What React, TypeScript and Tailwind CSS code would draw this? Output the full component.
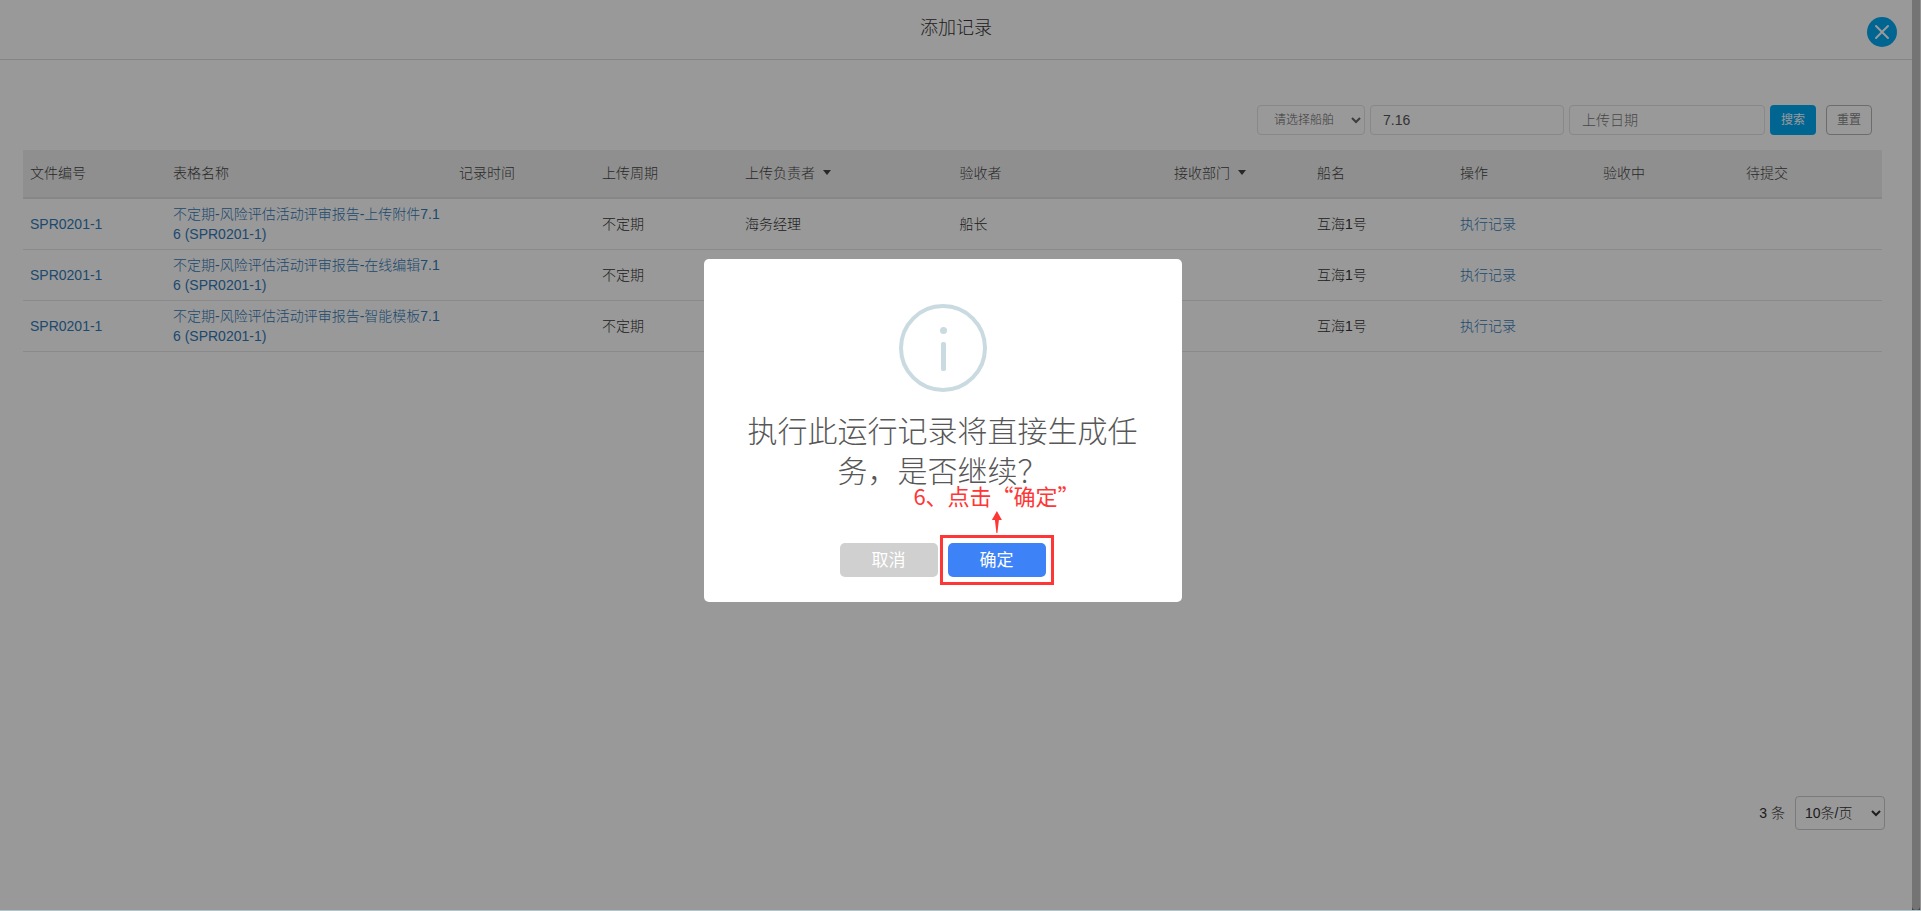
import { X } from "lucide-react";

interface RecordRow {
  code: string;
  name: string;
  period: string;
  uploader: string;
  checker: string;
  ship: string;
}

interface Column {
  title: string;
  width: string;
  sortable?: boolean;
}

const columns: Column[] = [
  { title: "文件编号", width: "w-1/13" },
  { title: "表格名称", width: "w-2/13" },
  { title: "记录时间", width: "w-1/13" },
  { title: "上传周期", width: "w-1/13" },
  { title: "上传负责者", width: "w-3/26", sortable: true },
  { title: "验收者", width: "w-3/26" },
  { title: "接收部门", width: "w-1/13", sortable: true },
  { title: "船名", width: "w-1/13" },
  { title: "操作", width: "w-1/13" },
  { title: "验收中", width: "w-1/13" },
  { title: "待提交", width: "w-1/13" },
];

const rows: RecordRow[] = ["上传附件", "在线编辑", "智能模板"].map((kind) => ({
  code: "SPR0201-1",
  name: `不定期-风险评估活动评审报告-${kind}7.16 (SPR0201-1)`,
  period: "不定期",
  uploader: "海务经理",
  checker: "船长",
  ship: "互海1号",
}));

function FilterBar() {
  return (
    <form className="flex justify-end pr-[10px]" onSubmit={(e) => e.preventDefault()}>
      <select
        aria-label="请选择船舶"
        className="mr-[5px] h-[30px] w-[108px] rounded border border-[#e3e3e3] bg-white pl-3 text-xs text-[#666]"
      >
        <option>请选择船舶</option>
      </select>
      <input
        aria-label="关键字"
        defaultValue="7.16"
        className="mr-[5px] h-[30px] w-[194px] rounded border border-[#e3e3e3] px-3 text-[#555]"
      />
      <input
        aria-label="上传日期"
        placeholder="上传日期"
        className="mr-[5px] h-[30px] w-[196px] rounded border border-[#e3e3e3] px-3 placeholder:text-[#777]"
      />
      <button className="mr-[10px] h-[30px] w-[46px] rounded bg-[#03a9f4] text-xs font-normal text-white">搜索</button>
      <button
        type="reset"
        className="h-[30px] w-[46px] rounded border border-[#b5b5b5] text-xs font-normal text-[#888]"
      >
        重置
      </button>
    </form>
  );
}

function RecordTable() {
  return (
    <table className="mt-[15px] w-full table-fixed border-collapse text-left">
      <thead>
        <tr className="h-12 border-b-2 border-[#e2e2e2] bg-[#eee] text-[#444]">
          {columns.map((col) => (
            <th key={col.title} className={`${col.width} px-[7px] pb-[2px] font-light`}>
              {col.sortable ? (
                <button className="flex items-center gap-2">
                  {col.title}
                  <svg viewBox="0 0 8 5" className="h-[5px] w-2 fill-[#444]">
                    <path d="M0 0h8L4 5z" />
                  </svg>
                </button>
              ) : (
                col.title
              )}
            </th>
          ))}
        </tr>
      </thead>
      <tbody>
        {rows.map((row) => (
          <tr key={row.name} className="h-[51px] border-b border-[#e6e6e6]">
            <td className="px-[7px]">
              <a href="#" className="text-[#337ab7]">{row.code}</a>
            </td>
            <td className="px-[7px] break-all">
              <a href="#" className="text-[#337ab7]">{row.name}</a>
            </td>
            <td />
            <td className="px-[7px]">{row.period}</td>
            <td className="px-[7px]">{row.uploader}</td>
            <td className="px-[7px]">{row.checker}</td>
            <td />
            <td className="px-[7px]">{row.ship}</td>
            <td className="px-[7px]">
              <a href="#" className="text-[#337ab7]">执行记录</a>
            </td>
            <td />
            <td />
          </tr>
        ))}
      </tbody>
    </table>
  );
}

function ConfirmDialog() {
  return (
    <div
      role="dialog"
      aria-modal="true"
      className="fixed top-[259px] left-1/2 -ml-[257px] flex w-[478px] flex-col items-center rounded-[5px] bg-white px-[17px] pt-[45px] pb-[25px]"
    >
      <svg viewBox="0 0 88 88" className="size-[88px]" fill="#c9dae1">
        <circle cx="44" cy="44" r="42" fill="none" stroke="#c9dae1" strokeWidth="4" />
        <circle cx="44.5" cy="26.5" r="3.5" />
        <rect x="42" y="38" width="5" height="29" rx="2" />
      </svg>
      <h2 className="mt-5 px-[27px] text-center text-[30px] leading-10 font-light text-[#575757]">
        执行此运行记录将直接生成任务，是否继续？
      </h2>
      <div className="mt-[51px] flex gap-[10px] text-[17px] font-normal text-white">
        <button className="h-[34px] w-[98px] rounded-[5px] bg-[#d0d0d0] pt-px">取消</button>
        <div className="relative">
          <button className="h-[34px] w-[98px] rounded-[5px] bg-[#3d82f7] pt-px">确定</button>
          {/* step marker drawn around the confirm button */}
          <div className="pointer-events-none absolute -inset-2 border-3 border-[#ff3636]" />
          <div className="pointer-events-none absolute bottom-11 left-1/2 flex -translate-x-1/2 flex-col items-center text-[22px] leading-8 whitespace-nowrap text-[#ff3636]">
            <span className="font-['Noto_Sans_CJK_SC',sans-serif]">6、点击“确定”</span>
            <svg viewBox="0 0 10 22" className="h-[22px] w-[10px] fill-[#ff3636]">
              <path d="M5 0l5 9H7L5.500 22h-1L3 9H0z" />
            </svg>
          </div>
        </div>
      </div>
    </div>
  );
}

export default function App() {
  return (
    <div className="flex min-h-screen border-b border-[#b3c6ca] bg-white font-['Liberation_Sans','Noto_Sans_CJK_SC',sans-serif] text-sm leading-5 font-light text-[#333]">
      <div className="flex flex-1 flex-col">
        <header className="relative flex h-[60px] justify-center border-b border-[#ddd] pt-[18px]">
          <h1 className="text-lg leading-5">添加记录</h1>
          <button
            aria-label="关闭"
            className="absolute top-[17px] right-[15px] flex size-[30px] items-center justify-center rounded-full bg-[#03a9f4] text-white"
          >
            <X size={24} strokeWidth={2} />
          </button>
        </header>
        <main className="flex flex-1 flex-col pt-[45px] pr-[30px] pl-[23px]">
          <FilterBar />
          <RecordTable />
          <div className="mt-auto mb-20 -mr-[3px] flex items-center justify-end gap-[10px]">
            <span>3 条</span>
            <select
              aria-label="每页条数"
              className="h-[34px] w-[90px] rounded border border-[#ccc] bg-white pl-[5px] text-[#333]"
            >
              <option>10条/页</option>
            </select>
          </div>
        </main>
      </div>
      <div className="flex w-2 bg-[#66757c]">
        <div className="flex-1 rounded-b bg-[#c1c1c1]" />
      </div>
      <div className="w-px bg-[#f5f5f5]" />
      <div className="fixed inset-x-0 top-0 bottom-px bg-black/40" />
      <ConfirmDialog />
    </div>
  );
}
